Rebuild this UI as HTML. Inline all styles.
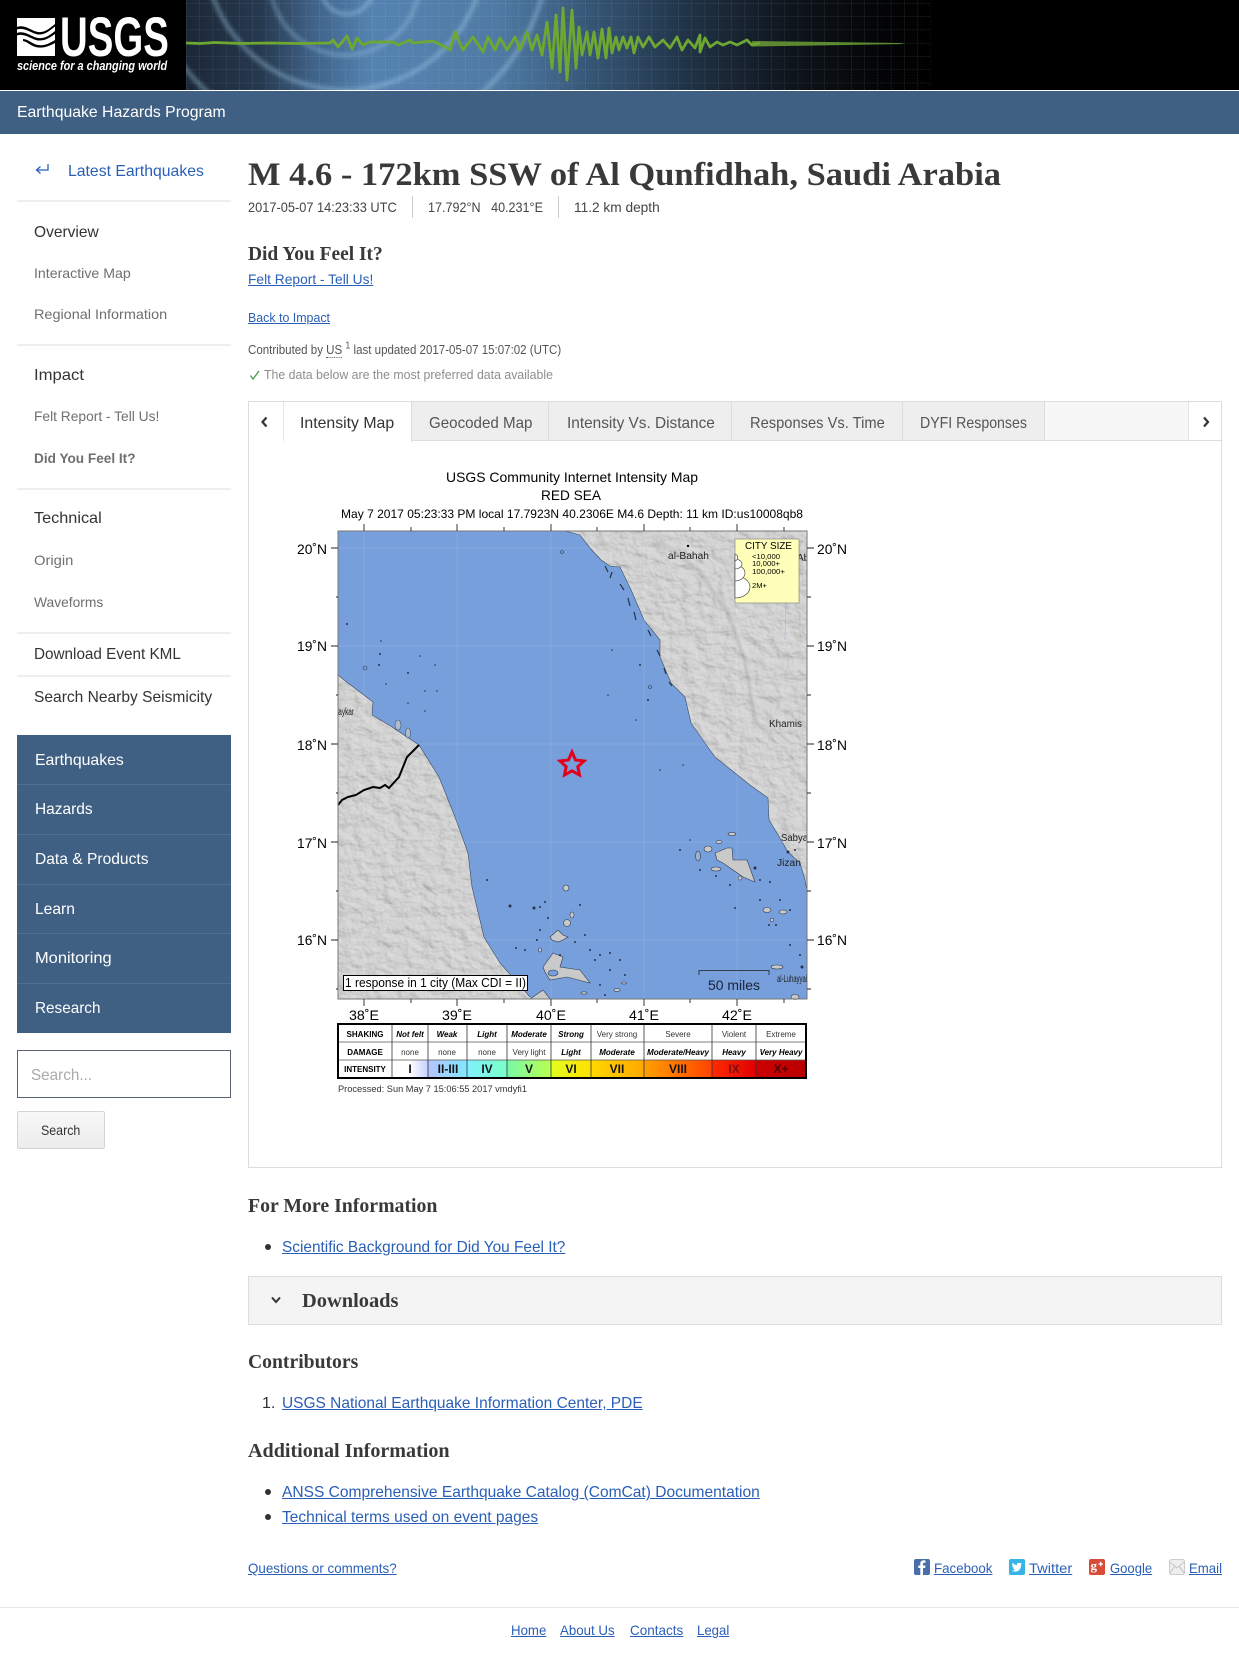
<!DOCTYPE html>
<html lang="en"><head><meta charset="utf-8"><title>M 4.6 - 172km SSW of Al Qunfidhah, Saudi Arabia</title>
<style>
html,body{margin:0;padding:0;background:#fff}
#p{position:relative;width:1239px;height:1653px;overflow:hidden;font-family:"Liberation Sans",sans-serif;color:#333;background:#fff}
.t{position:absolute;white-space:nowrap;line-height:24px;height:24px;transform-origin:0 50%;transform:scaleX(.9);font-size:16px}
.b{position:absolute}
.h{font-family:"Liberation Serif",serif;font-weight:bold;color:#3a3838}
a{color:#2a5fb8;text-decoration:underline}
.g{color:#6f6f6f;font-size:14px}
.w{color:#fff}
.hr{position:absolute;height:2px;background:#eee;left:17px;width:214px}
.nl{position:absolute;left:17px;width:214px;height:1px;background:#4f6e92}
.tab{position:absolute;top:402px;height:38px;background:#eee;border-right:1px solid #ddd;border-bottom:1px solid #ddd}
svg{position:absolute;display:block}
</style></head><body><div id="p">

<!-- header -->
<div class="b" style="left:0;top:0;width:1239px;height:90px;background:#000"></div>
<svg style="left:186px;top:0" width="745" height="90" viewBox="186 0 745 90">
<defs>
<linearGradient id="bg" x1="186" x2="931" y1="0" y2="0" gradientUnits="userSpaceOnUse">
<stop offset="0" stop-color="#1b2737"/><stop offset=".1" stop-color="#27394f"/><stop offset=".17" stop-color="#3f6288"/><stop offset=".25" stop-color="#5583b1"/><stop offset=".42" stop-color="#4f7aa4"/><stop offset=".55" stop-color="#345473"/><stop offset=".68" stop-color="#1f3144"/><stop offset=".8" stop-color="#10171f"/><stop offset=".93" stop-color="#040507"/><stop offset="1" stop-color="#000"/>
</linearGradient>
<pattern id="gr" x="186" y="3" width="13.3" height="13.3" patternUnits="userSpaceOnUse">
<path d="M0 0H13.3M0 0V13.3" stroke="#fff" stroke-opacity=".25" stroke-width="1" stroke-dasharray="1.2 1.5" fill="none"/>
</pattern>
<filter id="bl"><feGaussianBlur stdDeviation="2.200"/></filter>
</defs>
<rect x="186" y="0" width="745" height="90" fill="url(#bg)"/>
<g fill="none" stroke="#a7d2ee" filter="url(#bl)">
<circle cx="347" cy="-12" r="26" stroke-width="3" stroke-opacity=".55"/>
<circle cx="345" cy="-20" r="75" stroke-width="3.500" stroke-opacity=".4"/>
<circle cx="345" cy="-50" r="140" stroke-width="4" stroke-opacity=".45"/>
<circle cx="345" cy="-60" r="205" stroke-width="4" stroke-opacity=".45"/>
</g>
<rect x="186" y="0" width="745" height="90" fill="url(#gr)"/>
<polygon points="752,41 900,43 905,44 752,46.500" fill="#5d8a30"/>
<polyline fill="none" stroke="#6ea831" stroke-width="2.800" stroke-linejoin="round" points="186,43 200,43.500 215,42.500 240,43.500 270,43 300,43.500 330,43 333,40 338,47 347,36 352,49 357,38 363,45 370,42 393,42 398,45 410,40 413,43 433,41 447,48 450,50 455,32 463,50 473,37 483,52 488,37 495,50 500,38 507,50 515,37 520,50 527,32 532,50 537,35 542,55 547,22 552,68 556,15 560,72 563,8 567,80 572,10 576,68 579,27 582,55 587,32 590,55 594,32 598,58 602,29 606,58 609,28 612,53 616,37 619,50 623,37 627,48 631,37 634,53 638,37 643,47 649,37 655,47 663,40 670,48 677,37 682,50 688,40 695,48 700,35 700,52 705,38 710,47 717,42 723,45 730,42 737,45 747,40 752,45 760,43"/>
</svg>
<!-- logo -->
<div class="b" style="left:17px;top:18px;width:38px;height:38px;background:#fff"></div>
<svg style="left:17px;top:18px" width="38" height="38" viewBox="0 0 38 38">
<path d="M38 0H26L20 5L38 13Z" fill="#fff"/>
<path d="M0 9C8 6 14 13 21 14C28 15 33 10 38 6V8.500C32 13 28 17 21 16.500C14 15.500 8 9 0 11.500Z" fill="#000"/>
<path d="M0 15C8 12 14 19 21 20C28 21 33 17 38 13V16C32 20 28 23 21 22.500C14 21.500 8 15 0 17.500Z" fill="#000"/>
<path d="M6 21C11 21 15 26 21 27C28 28 33 25 38 22V25C32 28 28 30 21 29.500C14 28.500 11 24 6 23Z" fill="#000"/>
</svg>
<div class="t w" style="left:60px;top:7px;width:109px;height:60px;line-height:60px;font-size:56px;font-weight:bold">USGS</div>
<div class="t w" style="left:17px;top:54px;width:150px;font-size:13px;font-weight:bold;font-style:italic">science for a changing world</div>

<div class="b" style="left:0;top:91px;width:1239px;height:43px;background:#3f5f83"></div>
<div class="t w" style="left:17px;top:101px;width:209px;font-size:16px">Earthquake Hazards Program</div>

<!-- sidebar -->
<svg style="left:34px;top:161px" width="18" height="16" viewBox="0 0 18 16"><path d="M14 3V9H3M6.500 5.500L2.500 9L6.500 12.500" fill="none" stroke="#2a5fb8" stroke-width="1.300"/></svg>
<a class="t" style="left:68px;top:160px;width:136px;text-decoration:none">Latest Earthquakes</a>
<div class="hr" style="top:200px"></div>
<div class="t" style="left:34px;top:221px;width:65px">Overview</div>
<div class="t g" style="left:34px;top:261px;width:97px">Interactive Map</div>
<div class="t g" style="left:34px;top:302px;width:133px">Regional Information</div>
<div class="hr" style="top:344px"></div>
<div class="t" style="left:34px;top:364px;width:50px">Impact</div>
<div class="t g" style="left:34px;top:404px;width:125px">Felt Report - Tell Us!</div>
<div class="t g" style="left:34px;top:446px;width:102px;font-weight:bold">Did You Feel It?</div>
<div class="hr" style="top:488px"></div>
<div class="t" style="left:34px;top:507px;width:68px">Technical</div>
<div class="t g" style="left:34px;top:548px;width:39px">Origin</div>
<div class="t g" style="left:34px;top:590px;width:69px">Waveforms</div>
<div class="hr" style="top:632px"></div>
<div class="t" style="left:34px;top:643px;width:147px">Download Event KML</div>
<div class="hr" style="top:675px"></div>
<div class="t" style="left:34px;top:686px;width:178px">Search Nearby Seismicity</div>

<div class="b" style="left:17px;top:735px;width:214px;height:298px;background:#3f5f83"></div>
<div class="nl" style="top:784px"></div><div class="nl" style="top:834px"></div><div class="nl" style="top:884px"></div><div class="nl" style="top:933px"></div><div class="nl" style="top:983px"></div>
<div class="t w" style="left:35px;top:749px;width:89px">Earthquakes</div>
<div class="t w" style="left:35px;top:798px;width:58px">Hazards</div>
<div class="t w" style="left:35px;top:848px;width:114px">Data &amp; Products</div>
<div class="t w" style="left:35px;top:898px;width:40px">Learn</div>
<div class="t w" style="left:35px;top:947px;width:77px">Monitoring</div>
<div class="t w" style="left:35px;top:997px;width:65px">Research</div>

<div class="b" style="left:17px;top:1050px;width:212px;height:46px;border:1px solid #596270;background:#fff"></div>
<div class="t" style="left:31px;top:1064px;width:61px;color:#aaa">Search...</div>
<div class="b" style="left:17px;top:1111px;width:86px;height:36px;border:1px solid #d5d5d5;border-radius:2px;background:linear-gradient(#f8f8f8,#ececec)"></div>
<div class="t" style="left:41px;top:1118px;width:39px;font-size:14px">Search</div>

<!-- main head -->
<div class="t h" style="left:248px;top:155px;width:753px;height:40px;line-height:40px;font-size:33px">M 4.6 - 172km SSW of Al Qunfidhah, Saudi Arabia</div>
<div class="t" style="left:248px;top:195px;width:149px;font-size:14px;color:#444">2017-05-07 14:23:33 UTC</div>
<div class="b" style="left:412px;top:196px;width:1px;height:22px;background:#ccc"></div>
<div class="t" style="left:428px;top:195px;width:115px;font-size:14px;color:#444">17.792°N &nbsp; 40.231°E</div>
<div class="b" style="left:558px;top:196px;width:1px;height:22px;background:#ccc"></div>
<div class="t" style="left:574px;top:195px;width:86px;font-size:14px;color:#444">11.2 km depth</div>
<div class="t h" style="left:248px;top:242px;width:135px;font-size:20px">Did You Feel It?</div>
<a class="t" style="left:248px;top:267px;width:125px;font-size:14px">Felt Report - Tell Us!</a>
<a class="t" style="left:248px;top:306px;width:82px;font-size:13px">Back to Impact</a>
<div class="t" style="left:248px;top:338px;width:313px;font-size:13px;color:#555">Contributed by <span style="border-bottom:1px dotted #666">US</span> <sup style="font-size:10px;line-height:0">1</sup> last updated 2017-05-07 15:07:02 (UTC)</div>
<svg style="left:248px;top:368px" width="14" height="14" viewBox="0 0 14 14"><path d="M2.500 7.500L5 11L11 3" fill="none" stroke="#4a9a4a" stroke-width="1.300"/></svg>
<div class="t" style="left:264px;top:363px;width:289px;font-size:13px;color:#8d8d8d">The data below are the most preferred data available</div>

<!-- tabs -->
<div class="b" style="left:248px;top:401px;width:972px;height:765px;border:1px solid #ddd;background:#fff"></div>
<div class="b" style="left:249px;top:402px;width:972px;height:38px;background:#f7f7f7;border-bottom:1px solid #ddd"></div>
<div class="b" style="left:249px;top:402px;width:34px;height:39px;background:#fff;border-right:1px solid #e6e6e6"></div>
<div class="b" style="left:284px;top:402px;width:127px;height:40px;background:#fff;border-right:1px solid #ddd"></div>
<div class="tab" style="left:412px;width:136px"></div>
<div class="tab" style="left:549px;width:182px"></div>
<div class="tab" style="left:732px;width:170px"></div>
<div class="tab" style="left:903px;width:141px"></div>
<div class="b" style="left:1188px;top:402px;width:32px;height:38px;background:#fff;border-left:1px solid #e6e6e6;border-bottom:1px solid #ddd"></div>
<svg style="left:258px;top:414px" width="14" height="16" viewBox="0 0 14 16"><path d="M8.500 3.500L4.500 8L8.500 12.500" fill="none" stroke="#333" stroke-width="2.200"/></svg>
<svg style="left:1199px;top:414px" width="14" height="16" viewBox="0 0 14 16"><path d="M5 3.500L9 8L5 12.500" fill="none" stroke="#333" stroke-width="2.200"/></svg>
<div class="t" style="left:300px;top:412px;width:94px">Intensity Map</div>
<div class="t" style="left:429px;top:412px;width:103px;color:#555">Geocoded Map</div>
<div class="t" style="left:567px;top:412px;width:148px;color:#555">Intensity Vs. Distance</div>
<div class="t" style="left:750px;top:412px;width:135px;color:#555">Responses Vs. Time</div>
<div class="t" style="left:920px;top:412px;width:107px;color:#555">DYFI Responses</div>

<!-- map -->
<svg style="left:280px;top:460px" width="600" height="640" viewBox="280 460 600 640" font-family="Liberation Sans, sans-serif" fill="#000">
<defs>
<clipPath id="pl"><rect x="338" y="531" width="469" height="468"/></clipPath>
<clipPath id="landclip"><path id="lc" d="M565 531L580 535L590 548L601 560L610 566L620 567L632 592L644 620L660 640L660 657L671 683L685 697L691 723L705 743L715 757L750 785L768 798L769 820L777 833L788 852L800 863L805 880L807 890V531ZM338 675L348 683L373 702L372 715L389 725L419 745L439 777L455 817L468 853L472 887L484 937L500 963L530 997L531 999H338Z"/></clipPath>
<filter id="hs" x="0" y="0" width="100%" height="100%">
<feTurbulence type="fractalNoise" baseFrequency=".07 .09" numOctaves="3" seed="7"/>
<feDiffuseLighting surfaceScale="2" diffuseConstant="1.120" lighting-color="#d0d0d0"><feDistantLight azimuth="135" elevation="65"/></feDiffuseLighting>
</filter>
<filter id="sf"><feGaussianBlur stdDeviation="1.500"/></filter>
<linearGradient id="c1" x1="0" x2="1"><stop offset="0" stop-color="#fff"/><stop offset=".5" stop-color="#fff"/><stop offset="1" stop-color="#c4d0ff"/></linearGradient>
<linearGradient id="c2" x1="0" x2="1"><stop offset="0" stop-color="#b5c4ff"/><stop offset="1" stop-color="#80e8ff"/></linearGradient>
<linearGradient id="c3" x1="0" x2="1"><stop offset="0" stop-color="#80f0ff"/><stop offset="1" stop-color="#7affc8"/></linearGradient>
<linearGradient id="c4" x1="0" x2="1"><stop offset="0" stop-color="#78f8a8"/><stop offset="1" stop-color="#b8ff50"/></linearGradient>
<linearGradient id="c5" x1="0" x2="1"><stop offset="0" stop-color="#e0ff20"/><stop offset="1" stop-color="#ffe000"/></linearGradient>
<linearGradient id="c6" x1="0" x2="1"><stop offset="0" stop-color="#ffd800"/><stop offset="1" stop-color="#ffa800"/></linearGradient>
<linearGradient id="c7" x1="0" x2="1"><stop offset="0" stop-color="#ffa000"/><stop offset="1" stop-color="#ff4400"/></linearGradient>
<linearGradient id="c8" x1="0" x2="1"><stop offset="0" stop-color="#ff2a00"/><stop offset="1" stop-color="#e00000"/></linearGradient>
<linearGradient id="c9" x1="0" x2="1"><stop offset="0" stop-color="#cc0000"/><stop offset="1" stop-color="#b80000"/></linearGradient>
</defs>
<text x="446" y="482" font-size="14" textLength="252" lengthAdjust="spacingAndGlyphs">USGS Community Internet Intensity Map</text>
<text x="541" y="500" font-size="14" textLength="60" lengthAdjust="spacingAndGlyphs">RED SEA</text>
<text x="341" y="518" font-size="12" textLength="462" lengthAdjust="spacingAndGlyphs">May 7 2017 05:23:33 PM local 17.7923N 40.2306E M4.6 Depth: 11 km ID:us10008qb8</text>

<rect x="338" y="531" width="469" height="468" fill="#769fdc"/>
<g clip-path="url(#landclip)"><rect x="338" y="531" width="469" height="468" fill="#c9c9c9"/><rect x="338" y="531" width="469" height="468" filter="url(#hs)"/>
<g filter="url(#sf)" fill="none" stroke-width="3"><path d="M720 590L745 660L755 720L770 735M660 540L700 570L725 610" stroke="#8e8e8e" opacity=".45"/><path d="M723 590L748 660L758 720L773 735M663 540L703 570L728 610" stroke="#e6e6e6" opacity=".5"/></g></g>
<path d="M565 531L580 535L590 548L601 560L610 566L620 567L632 592L644 620L660 640L660 657L671 683L685 697L691 723L705 743L715 757L750 785L768 798L769 820L777 833L788 852L800 863L805 880L807 890" fill="none" stroke="#3a4a60" stroke-width=".6"/>
<path d="M338 675L348 683L373 702L372 715L389 725L419 745L439 777L455 817L468 853L472 887L484 937L500 963L530 997" fill="none" stroke="#3a4a60" stroke-width=".6"/>
<g stroke="#fff" stroke-opacity=".12" stroke-width="1"><path d="M364 531V999M457 531V999M551 531V999M644 531V999M737 531V999M338 548H807M338 646H807M338 744H807M338 842H807M338 940H807"/></g>
<path d="M419 745L407 757L399 777L389 788L385 785L380 788L373 787L364 790L356 795L348 797L342 800L338 805" fill="none" stroke="#000" stroke-width="2"/>
<path d="M786 600L785 640M802 540L785 590" fill="none" stroke="#8f9fe0" stroke-width=".6" opacity=".6"/>
<g fill="#c9c9c9" stroke="#2f3a4c" stroke-width=".6">
<path d="M715 853L727 848L732 848L733 860L747 860L755 882L743 877L733 870L723 863L717 860Z"/>
<ellipse cx="708" cy="849" rx="4" ry="3"/><ellipse cx="716" cy="869" rx="5" ry="2"/><ellipse cx="698" cy="856" rx="2.500" ry="5" fill="#9fb2cc"/><ellipse cx="740" cy="878" rx="2" ry="2"/><ellipse cx="719" cy="842" rx="3" ry="1.500"/><ellipse cx="732" cy="834" rx="4" ry="1.500"/>
<path d="M550 937L558 930L563 935L568 937L563 940L558 942L552 940Z"/>
<circle cx="567" cy="923" r="3.500"/><ellipse cx="572" cy="915" rx="2" ry="3"/>
<path d="M543 967L553 953L563 957L560 967L580 970L590 983L567 977L550 980L545 972Z"/>
<ellipse cx="553" cy="973" rx="5" ry="3" fill="#769fdc"/>
<path d="M530 999L543 990L550 999Z"/>
<ellipse cx="767" cy="910" rx="4" ry="2.500"/><ellipse cx="783" cy="912" rx="4" ry="2"/><circle cx="772" cy="920" r="1.800"/><ellipse cx="777" cy="967" rx="6" ry="2"/><ellipse cx="795" cy="997" rx="4" ry="2.500"/>
<ellipse cx="566" cy="888" rx="3" ry="3"/><ellipse cx="540" cy="950" rx="1.500" ry="2"/><ellipse cx="617" cy="990" rx="3" ry="1.500"/><ellipse cx="584" cy="993" rx="3" ry="1.200"/><ellipse cx="624" cy="983" rx="2.500" ry="1"/>
<ellipse cx="398" cy="725" rx="3" ry="5" opacity=".7"/><ellipse cx="408" cy="733" rx="2.500" ry="5" opacity=".7"/><circle cx="365" cy="668" r="2" fill="#769fdc"/><circle cx="562" cy="552" r="1.500" fill="#769fdc"/><circle cx="650" cy="687" r="1.500" fill="#769fdc"/>
</g>
<g fill="#26324a"><circle cx="380" cy="654" r="1"/><circle cx="347" cy="624" r="1"/><circle cx="381" cy="641" r=".8"/><circle cx="379" cy="665" r="1"/><circle cx="408" cy="673" r="1"/><circle cx="420" cy="656" r=".8"/><circle cx="435" cy="665" r=".8"/><circle cx="386" cy="684" r=".8"/><circle cx="425" cy="691" r=".8"/><circle cx="437" cy="691" r=".8"/><circle cx="408" cy="703" r=".8"/><circle cx="425" cy="711" r=".8"/><circle cx="612" cy="650" r=".8"/><circle cx="608" cy="695" r=".8"/><circle cx="640" cy="665" r="1"/><circle cx="648" cy="700" r="1"/><circle cx="660" cy="770" r=".8"/><circle cx="683" cy="765" r=".8"/><circle cx="636" cy="720" r=".8"/>
<circle cx="487" cy="880" r="1"/><circle cx="510" cy="906" r="1.500"/><circle cx="534" cy="908" r="1.500"/><circle cx="540" cy="907" r="1"/><circle cx="545" cy="902" r="1"/><circle cx="516" cy="948" r="1"/><circle cx="525" cy="950" r="1"/><circle cx="537" cy="940" r="1"/><circle cx="580" cy="905" r="1"/><circle cx="590" cy="950" r="1"/><circle cx="600" cy="955" r="1"/><circle cx="610" cy="953" r="1"/><circle cx="595" cy="960" r="1"/><circle cx="620" cy="960" r="1"/><circle cx="625" cy="975" r="1"/><circle cx="610" cy="970" r="1"/><circle cx="600" cy="985" r="1"/><circle cx="605" cy="995" r="1"/><circle cx="575" cy="942" r="1"/><circle cx="585" cy="935" r="1"/><circle cx="540" cy="930" r="1"/><circle cx="548" cy="918" r="1"/><circle cx="560" cy="955" r="1"/><circle cx="700" cy="870" r="1"/><circle cx="716" cy="876" r="1"/><circle cx="730" cy="885" r="1"/><circle cx="760" cy="880" r="1"/><circle cx="770" cy="882" r="1"/><circle cx="760" cy="900" r="1"/><circle cx="780" cy="900" r="1"/><circle cx="790" cy="910" r="1"/><circle cx="735" cy="908" r="1"/><circle cx="769" cy="925" r="1"/><circle cx="776" cy="925" r="1"/><circle cx="790" cy="945" r="1"/><circle cx="800" cy="955" r="1"/><circle cx="802" cy="967" r="1.500"/><circle cx="795" cy="850" r="1"/><circle cx="788" cy="852" r="1.500"/><circle cx="690" cy="840" r=".8"/><circle cx="680" cy="850" r="1"/><circle cx="755" cy="868" r="1.500"/></g>
<path d="M605 566L608 572M612 572L610 578M620 584L624 590M628 598L630 606M634 612L636 620M648 630L651 636M657 650L660 656M664 668L666 674M669 682L672 686" stroke="#26324a" stroke-width="1.200" fill="none"/>
<circle cx="688" cy="546" r="1.200"/>
<g font-size="10" fill="#222" clip-path="url(#pl)">
<text x="668" y="559" textLength="41" lengthAdjust="spacingAndGlyphs">al-Bahah</text>
<text x="769" y="727" textLength="33" lengthAdjust="spacingAndGlyphs">Khamis</text>
<text x="334" y="715" textLength="20" lengthAdjust="spacingAndGlyphs">Saykar</text>
<text x="781" y="841" textLength="27" lengthAdjust="spacingAndGlyphs">Sabya</text>
<text x="777" y="866" textLength="24" lengthAdjust="spacingAndGlyphs">Jizan</text>
<text x="777" y="982" textLength="32" lengthAdjust="spacingAndGlyphs">al-Luhayyah</text>
<text x="797" y="561">Abis</text>
</g>
<rect x="735" y="539" width="64" height="64" fill="#ffffb9" stroke="#888" stroke-width=".7"/>
<text x="745" y="549" font-size="10" textLength="47" lengthAdjust="spacingAndGlyphs">CITY SIZE</text>
<g font-size="7.500"><text x="752" y="559" textLength="28" lengthAdjust="spacingAndGlyphs">&lt;10,000</text><text x="752" y="566" textLength="28" lengthAdjust="spacingAndGlyphs">10,000+</text><text x="752" y="574" textLength="33" lengthAdjust="spacingAndGlyphs">100,000+</text><text x="752" y="588" textLength="15" lengthAdjust="spacingAndGlyphs">2M+</text></g>
<g fill="#fff" stroke="#333" stroke-width=".6"><path d="M735 576A15 11 0 0 1 735 598Z"/><path d="M735 565A10 8 0 0 1 735 581Z"/><path d="M735 559A7 5 0 0 1 735 569Z"/><path d="M735 554A5.500 4 0 0 1 735 561Z"/></g>
<rect x="343.500" y="975.500" width="184" height="15" fill="#fff" stroke="#000"/>
<text x="345" y="987" font-size="12.500" textLength="181" lengthAdjust="spacingAndGlyphs">1 response in 1 city (Max CDI = II)</text>
<path d="M699 975V970.500H769V975" fill="none" stroke="#222" stroke-width=".8"/>
<text x="708" y="990" font-size="14" fill="#1a2236" textLength="52" lengthAdjust="spacingAndGlyphs">50 miles</text>
<!-- star -->
<path d="M572 752L575.500 760L584 761L577.800 766.700L579.500 775L572 770.800L564.500 775L566.200 766.700L560 761L568.500 760Z" fill="#769fdc" stroke="#e3001b" stroke-width="3"/>
<path d="M338 531H807V999H338Z" fill="none" stroke="#777" stroke-width="1"/>
<!-- ticks -->
<path d="M364 524V531M457 524V531M551 524V531M644 524V531M737 524V531M411 527V531M504 527V531M597 527V531M690 527V531M784 527V531M364 999V1006M457 999V1006M551 999V1006M644 999V1006M737 999V1006M411 999V1003M504 999V1003M597 999V1003M690 999V1003M784 999V1003M331 548H338M331 646H338M331 744H338M331 842H338M331 940H338M336 597H338M336 695H338M336 793H338M336 891H338M336 989H338M807 548H814M807 646H814M807 744H814M807 842H814M807 940H814M807 597H811M807 695H811M807 793H811M807 891H811M807 989H811" stroke="#222" stroke-width=".9"/>
<g font-size="14">
<text x="297" y="554" textLength="30" lengthAdjust="spacingAndGlyphs">20˚N</text><text x="297" y="651" textLength="30" lengthAdjust="spacingAndGlyphs">19˚N</text><text x="297" y="750" textLength="30" lengthAdjust="spacingAndGlyphs">18˚N</text><text x="297" y="848" textLength="30" lengthAdjust="spacingAndGlyphs">17˚N</text><text x="297" y="945" textLength="30" lengthAdjust="spacingAndGlyphs">16˚N</text>
<text x="817" y="554" textLength="30" lengthAdjust="spacingAndGlyphs">20˚N</text><text x="817" y="651" textLength="30" lengthAdjust="spacingAndGlyphs">19˚N</text><text x="817" y="750" textLength="30" lengthAdjust="spacingAndGlyphs">18˚N</text><text x="817" y="848" textLength="30" lengthAdjust="spacingAndGlyphs">17˚N</text><text x="817" y="945" textLength="30" lengthAdjust="spacingAndGlyphs">16˚N</text>
<text x="349" y="1020" textLength="30" lengthAdjust="spacingAndGlyphs">38˚E</text><text x="442" y="1020" textLength="30" lengthAdjust="spacingAndGlyphs">39˚E</text><text x="536" y="1020" textLength="30" lengthAdjust="spacingAndGlyphs">40˚E</text><text x="629" y="1020" textLength="30" lengthAdjust="spacingAndGlyphs">41˚E</text><text x="722" y="1020" textLength="30" lengthAdjust="spacingAndGlyphs">42˚E</text>
</g>
<!-- legend -->
<rect x="338" y="1024" width="468" height="53" fill="#fff"/>
<rect x="392" y="1060" width="36" height="17" fill="url(#c1)"/><rect x="428" y="1060" width="39" height="17" fill="url(#c2)"/><rect x="467" y="1060" width="40" height="17" fill="url(#c3)"/><rect x="507" y="1060" width="44" height="17" fill="url(#c4)"/><rect x="551" y="1060" width="40" height="17" fill="url(#c5)"/><rect x="591" y="1060" width="53" height="17" fill="url(#c6)"/><rect x="644" y="1060" width="68" height="17" fill="url(#c7)"/><rect x="712" y="1060" width="44" height="17" fill="url(#c8)"/><rect x="756" y="1060" width="50" height="17" fill="url(#c9)"/>
<path d="M338 1042H806M338 1060H806" stroke="#555" stroke-width=".8"/>
<path d="M392 1024V1077M428 1024V1077M467 1024V1077M507 1024V1077M551 1024V1077M591 1024V1077M644 1024V1077M712 1024V1077M756 1024V1077" stroke="#333" stroke-width=".8"/>
<rect x="338" y="1024" width="468" height="54" fill="none" stroke="#000" stroke-width="2"/>
<g font-size="8" text-anchor="middle" font-weight="bold">
<text x="365" y="1037">SHAKING</text><text x="365" y="1055">DAMAGE</text><text x="365" y="1072">INTENSITY</text></g>
<g font-size="8" text-anchor="middle" font-style="italic" font-weight="bold">
<text x="410" y="1037">Not felt</text><text x="447" y="1037">Weak</text><text x="487" y="1037">Light</text><text x="529" y="1037">Moderate</text><text x="571" y="1037">Strong</text>
<text x="571" y="1055">Light</text><text x="617" y="1055">Moderate</text><text x="678" y="1055" textLength="62" lengthAdjust="spacingAndGlyphs">Moderate/Heavy</text><text x="734" y="1055">Heavy</text><text x="781" y="1055">Very Heavy</text></g>
<g font-size="8" text-anchor="middle" fill="#333">
<text x="617" y="1037">Very strong</text><text x="678" y="1037">Severe</text><text x="734" y="1037">Violent</text><text x="781" y="1037">Extreme</text>
<text x="410" y="1055">none</text><text x="447" y="1055">none</text><text x="487" y="1055">none</text><text x="529" y="1055">Very light</text></g>
<g font-size="12" text-anchor="middle" font-weight="bold" fill="#111">
<text x="410" y="1073">I</text><text x="448" y="1073">II-III</text><text x="487" y="1073">IV</text><text x="529" y="1073">V</text><text x="571" y="1073">VI</text><text x="617" y="1073">VII</text><text x="678" y="1073">VIII</text><text x="734" y="1073" fill="#7a1010">IX</text><text x="781" y="1073" fill="#500">X+</text></g>
<text x="338" y="1092" font-size="9" fill="#333" textLength="189" lengthAdjust="spacingAndGlyphs">Processed: Sun May  7 15:06:55 2017 vmdyfi1</text>
</svg>

<!-- lower -->
<div class="t h" style="left:248px;top:1194px;width:189px;font-size:20px">For More Information</div>
<div class="b" style="left:265px;top:1244px;width:6px;height:6px;border-radius:3px;background:#333"></div>
<a class="t" style="left:282px;top:1236px;width:283px">Scientific Background for Did You Feel It?</a>
<div class="b" style="left:248px;top:1276px;width:972px;height:47px;background:#f4f4f4;border:1px solid #ddd"></div>
<svg style="left:269px;top:1293px" width="14" height="14" viewBox="0 0 14 14"><path d="M3 4.500L7 9L11 4.500" fill="none" stroke="#333" stroke-width="2"/></svg>
<div class="t h" style="left:302px;top:1289px;width:96px;font-size:20px">Downloads</div>
<div class="t h" style="left:248px;top:1350px;width:110px;font-size:20px">Contributors</div>
<div class="t" style="left:262px;top:1392px;width:13px">1.</div>
<a class="t" style="left:282px;top:1392px;width:361px">USGS National Earthquake Information Center, PDE</a>
<div class="t h" style="left:248px;top:1439px;width:202px;font-size:20px">Additional Information</div>
<div class="b" style="left:265px;top:1489px;width:6px;height:6px;border-radius:3px;background:#333"></div>
<a class="t" style="left:282px;top:1481px;width:478px">ANSS Comprehensive Earthquake Catalog (ComCat) Documentation</a>
<div class="b" style="left:265px;top:1514px;width:6px;height:6px;border-radius:3px;background:#333"></div>
<a class="t" style="left:282px;top:1506px;width:256px">Technical terms used on event pages</a>
<a class="t" style="left:248px;top:1556px;width:149px;font-size:14px">Questions or comments?</a>

<svg style="left:914px;top:1559px" width="16" height="16" viewBox="0 0 16 16"><rect width="16" height="16" rx="2" fill="#4a6ea9"/><path d="M9 16V9H11.200L11.500 6.500H9V5C9 4.200 9.300 3.800 10.200 3.800H11.500V1.500C11 1.400 10.200 1.400 9.500 1.400C7.500 1.400 6.300 2.600 6.300 4.700V6.500H4.300V9H6.300V16Z" fill="#fff"/></svg>
<a class="t" style="left:934px;top:1556px;width:58px;font-size:14px">Facebook</a>
<svg style="left:1009px;top:1559px" width="16" height="16" viewBox="0 0 16 16"><rect width="16" height="16" rx="2" fill="#39b4e8"/><path d="M13 4.500C12.600 4.700 12.200 4.800 11.700 4.900C12.200 4.600 12.500 4.200 12.700 3.700C12.200 4 11.700 4.200 11.200 4.300C10.200 3.200 8 3.800 7.900 5.400C7.900 5.700 7.900 5.900 8 6.100C6.200 6 4.600 5.100 3.500 3.800C2.900 4.900 3.300 6.200 4.200 6.900C3.800 6.900 3.500 6.800 3.200 6.600C3.200 7.800 4 8.700 5 9C4.700 9.100 4.400 9.100 4.100 9C4.400 9.900 5.200 10.600 6.200 10.600C5.100 11.400 4 11.800 2.800 11.600C6.500 14 12 12.100 12 6.400V5.800C12.400 5.500 12.800 5 13 4.500Z" fill="#fff"/></svg>
<a class="t" style="left:1029px;top:1556px;width:43px;font-size:14px">Twitter</a>
<svg style="left:1089px;top:1559px" width="16" height="16" viewBox="0 0 16 16"><rect width="16" height="16" rx="2" fill="#d84b37"/><text x="1.500" y="11" font-family="Liberation Serif, serif" font-weight="bold" font-size="13" fill="#fff">g</text><path d="M9.500 5H14M11.700 2.800V7.200" stroke="#fff" stroke-width="1.300"/></svg>
<a class="t" style="left:1110px;top:1556px;width:42px;font-size:14px">Google</a>
<svg style="left:1169px;top:1559px" width="16" height="16" viewBox="0 0 16 16"><rect x=".5" y=".5" width="15" height="15" rx="2" fill="#eee" stroke="#ccc"/><path d="M1 3L8 9L15 3M1 14L6 7M15 14L10 7" fill="none" stroke="#bbb" stroke-width=".8"/></svg>
<a class="t" style="left:1189px;top:1556px;width:33px;font-size:14px">Email</a>

<div class="b" style="left:0;top:1607px;width:1239px;height:1px;background:#e8e8e8"></div>
<a class="t" style="left:511px;top:1618px;width:35px;font-size:14px">Home</a>
<a class="t" style="left:560px;top:1618px;width:55px;font-size:14px">About Us</a>
<a class="t" style="left:630px;top:1618px;width:53px;font-size:14px">Contacts</a>
<a class="t" style="left:697px;top:1618px;width:32px;font-size:14px">Legal</a>

</div>
<script>
(function(){var e=document.querySelectorAll('.t');for(var i=0;i<e.length;i++){var s=e[i],t=parseFloat(s.style.width);s.style.width='auto';var n=s.offsetWidth;if(n>0&&t>0){s.style.transform='scaleX('+(t/n)+')';}}})();
</script>
</body></html>
